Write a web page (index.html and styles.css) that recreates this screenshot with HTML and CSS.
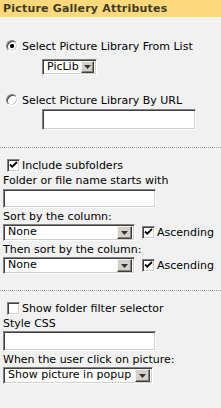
FILE: index.html
```html
<!DOCTYPE html>
<html lang="en">
<head>
<meta charset="UTF-8">
<meta name="viewport" content="width=device-width, initial-scale=1.0">
<title>Picture Gallery Attributes</title>
<link rel="stylesheet" href="styles.css">
</head>
<body>
<div class="panel">
    <div class="title">Picture Gallery Attributes</div>

    <div class="section source">
        <div class="opt first"><span class="radio on"></span>Select Picture Library From List</div>
        <div class="select piclib"><span class="val">PicLib</span><span class="drop"><svg width="7" height="4"><path d="M0 0h7L3.5 4z"/></svg></span></div>
        <div class="opt second"><span class="radio"></span>Select Picture Library By URL</div>
        <div class="textbox url"></div>
    </div>

    <div class="section">
        <div class="opt check-row"><span class="check"><svg width="9" height="9"><path d="M1 3.5l2.2 2.2L8 1"/></svg></span>Include subfolders</div>
        <div class="label">Folder or file name starts with</div>
        <div class="textbox wide tb-folder"></div>
        <div class="label">Sort by the column:</div>
        <div class="sort-row">
            <div class="select sort"><span class="val">None</span><span class="drop"><svg width="7" height="4"><path d="M0 0h7L3.5 4z"/></svg></span></div>
            <span class="check"><svg width="9" height="9"><path d="M1 3.5l2.2 2.2L8 1"/></svg></span>Ascending
        </div>
        <div class="label">Then sort by the column:</div>
        <div class="sort-row">
            <div class="select sort"><span class="val">None</span><span class="drop"><svg width="7" height="4"><path d="M0 0h7L3.5 4z"/></svg></span></div>
            <span class="check"><svg width="9" height="9"><path d="M1 3.5l2.2 2.2L8 1"/></svg></span>Ascending
        </div>
    </div>

    <div class="section">
        <div class="opt check-row"><span class="check off"></span>Show folder filter selector</div>
        <div class="label">Style CSS</div>
        <div class="textbox wide tb-css"></div>
        <div class="label">When the user click on picture:</div>
        <div class="select popup"><span class="val">Show picture in popup</span><span class="drop"><svg width="7" height="4"><path d="M0 0h7L3.5 4z"/></svg></span></div>
    </div>
</div>
</body>
</html>
```

FILE: styles.css
```css
body {
    margin: 0;
    padding: 0;
    background-color: #f1f1f1;
    font-family: 'DejaVu Sans', Verdana, sans-serif;
    font-size: 11px;
    color: #000;
}
.panel {
    width: 221px;
}
.title {
    height: 17px;
    line-height: 17px;
    padding-left: 3px;
    background-color: #fdd97c;
    color: #3c3c28;
    font-weight: bold;
    font-size: 11px;
    letter-spacing: 0.2px;
}
.section {
    border-top: 1px dotted #9a9a9a;
    padding-bottom: 16px;
}
.section.source {
    border-top: none;
    padding-bottom: 17px;
}
.opt {
    display: flex;
    align-items: center;
    height: 14px;
    padding-left: 6px;
}
.opt.first {
    margin-top: 22px;
}
.opt.second {
    margin-top: 18px;
}
.check-row {
    margin-top: 10px;
    padding-left: 7px;
}
.label {
    height: 14px;
    line-height: 14px;
    margin-top: 2px;
    padding-left: 3px;
}
.radio {
    width: 12px;
    height: 12px;
    box-sizing: border-box;
    border-radius: 50%;
    border: 1px solid;
    border-color: #808080 #fff #fff #808080;
    box-shadow: inset 1px 1px #404040, inset -1px -1px #d4d0c8;
    background: #fff;
    margin-right: 4px;
}
.radio.on {
    background: radial-gradient(circle, #000 0, #000 1.8px, #fff 2.4px);
}
.check {
    width: 13px;
    height: 13px;
    box-sizing: border-box;
    border: 1px solid;
    border-color: #808080 #fff #fff #808080;
    box-shadow: inset 1px 1px #404040, inset -1px -1px #d4d0c8;
    background: #fff;
    display: flex;
    align-items: center;
    justify-content: center;
    margin-right: 2px;
    flex-shrink: 0;
}
.check path {
    fill: none;
    stroke: #000;
    stroke-width: 1.8;
}
.textbox {
    box-sizing: border-box;
    border: 1px solid;
    border-color: #808080 #fff #fff #808080;
    box-shadow: inset 1px 1px #404040, inset -1px -1px #d4d0c8;
    background: #fff;
}
.textbox.url {
    width: 154px;
    height: 21px;
    margin: 2px 0 0 42px;
}
.textbox.wide {
    width: 153px;
    margin-left: 3px;
}
.tb-folder {
    height: 19px;
    margin-top: 1px;
}
.tb-css {
    height: 20px;
}
.select {
    display: flex;
    box-sizing: border-box;
    height: 17px;
    border: 1px solid;
    border-color: #808080 #fff #fff #808080;
    box-shadow: inset 1px 1px #404040, inset -1px -1px #d4d0c8;
    background: #fff;
    padding: 2px;
}
.select .val {
    flex: 1;
    line-height: 13px;
    padding-left: 2px;
    margin-top: -2px;
    height: 13px;
    white-space: nowrap;
}
.select .drop {
    width: 13px;
    box-sizing: border-box;
    margin: -1px 0;
    background: #d4d0c8;
    border: 1px solid;
    border-color: #f4f3ef #404040 #404040 #f4f3ef;
    box-shadow: inset -1px -1px #808080;
    display: flex;
    align-items: center;
    justify-content: center;
}
.select .drop path {
    fill: #333;
}
.select.piclib {
    width: 55px;
    height: 16px;
    margin: 6px 0 0 42px;
}
.select.sort {
    width: 132px;
    margin-right: 7px;
}
.select.sort .drop {
    width: 15px;
}
.sort-row {
    display: flex;
    align-items: center;
    margin-left: 3px;
}
.select.popup {
    width: 150px;
    margin-left: 3px;
}
.select.popup .drop {
    width: 15px;
}
```
